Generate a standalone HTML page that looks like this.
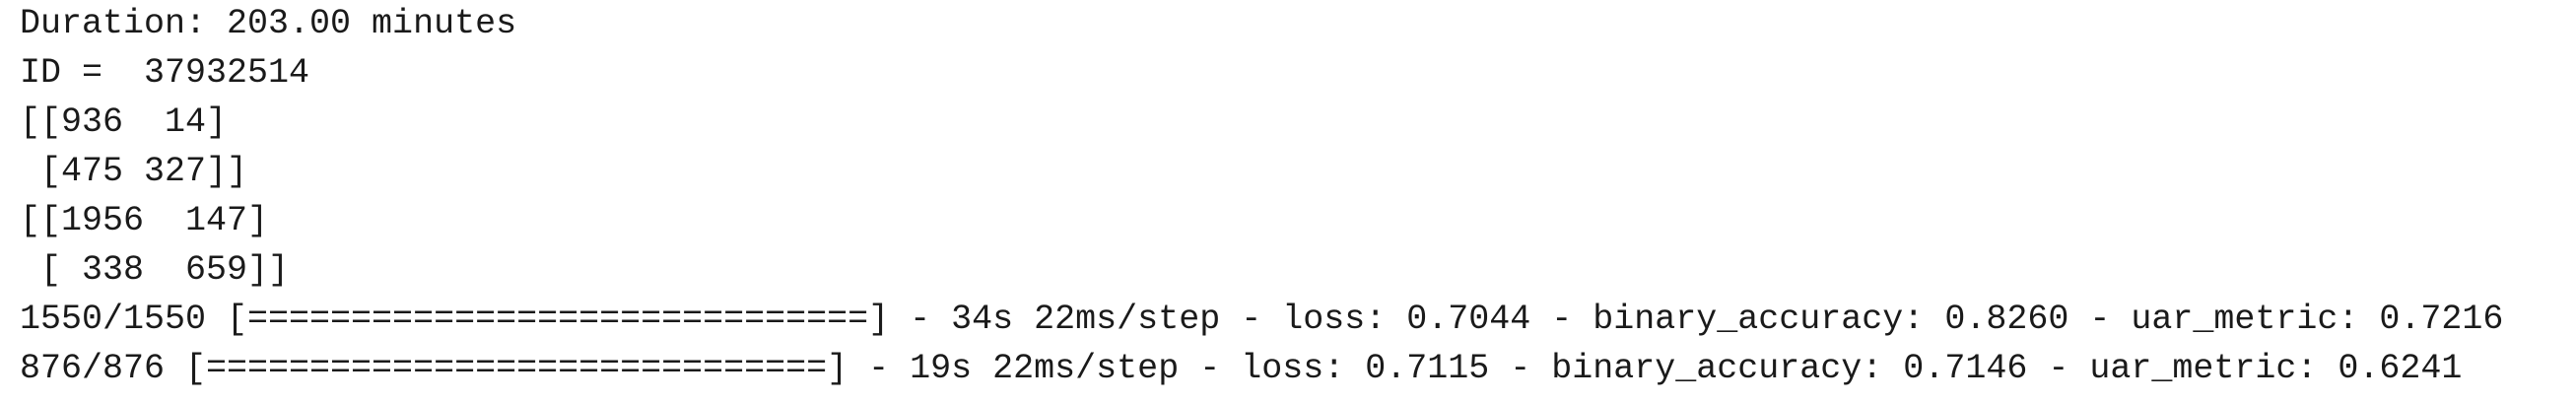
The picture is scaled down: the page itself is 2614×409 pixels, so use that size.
<!DOCTYPE html>
<html><head><meta charset="utf-8"><style>
html,body{margin:0;padding:0;background:#fff;width:2614px;height:409px;overflow:hidden}
pre{margin:0;position:absolute;left:20px;top:-1px;font-family:"Liberation Mono",monospace;font-size:35px;line-height:50px;color:#1a1a1a}
</style></head><body><pre>Duration: 203.00 minutes
ID =  37932514
[[936  14]
 [475 327]]
[[1956  147]
 [ 338  659]]
1550/1550 [==============================] - 34s 22ms/step - loss: 0.7044 - binary_accuracy: 0.8260 - uar_metric: 0.7216
876/876 [==============================] - 19s 22ms/step - loss: 0.7115 - binary_accuracy: 0.7146 - uar_metric: 0.6241</pre></body></html>
